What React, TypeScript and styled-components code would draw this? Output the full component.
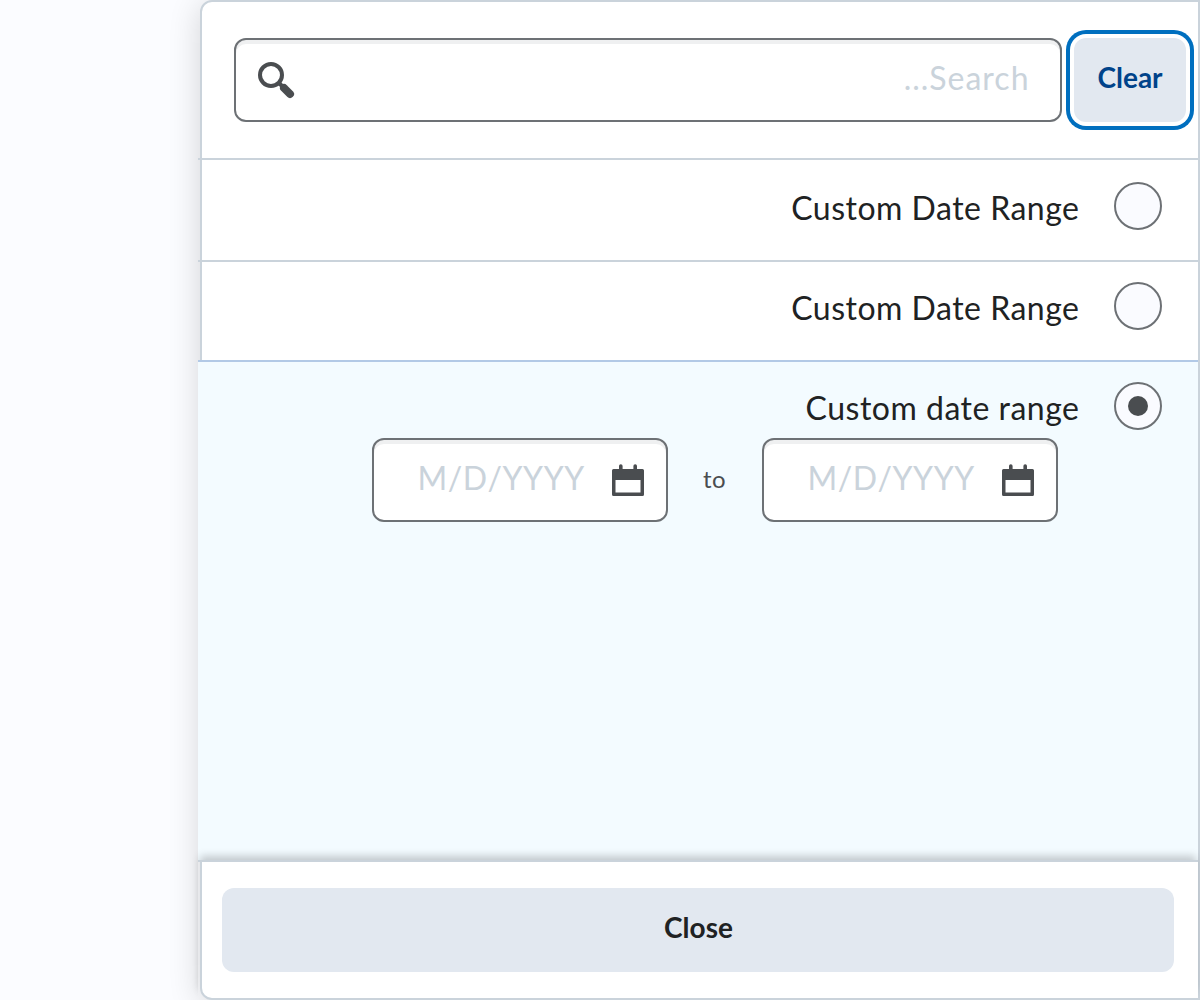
import React from "react";
import styled, { createGlobalStyle, css } from "styled-components";

const Global = createGlobalStyle`
  *, *::before, *::after { box-sizing: border-box; }
  body {
    margin: 0;
    background: #fbfcff;
    color: #202223;
    font-family: Lato, "Liberation Sans", sans-serif;
    overflow: hidden;
  }
`;

const Page = styled.main`
  height: 1000px;
  padding-left: 200px;
`;

const Panel = styled.section`
  display: flex;
  flex-direction: column;
  height: 1000px;
  border: 2px solid #cad3db;
  border-radius: 12px 0 0 12px;
  background: #fff;
  box-shadow: 0 4px 32px rgba(0, 0, 0, 0.16);
`;

const SearchBar = styled.header`
  display: flex;
  gap: 12px;
  height: 158px;
  margin-left: -4px;
  padding: 36px 12px 0 36px;
  border-bottom: 2px solid #cad3db;
`;

const Field = styled.div<{ $width: number; $padding: string }>`
  display: flex;
  align-items: center;
  justify-content: space-between;
  width: ${(p) => p.$width}px;
  height: 84px;
  padding: ${(p) => p.$padding};
  border: 2px solid #6d7175;
  border-radius: 12px;
  background: #fff;
  box-shadow: inset 0 4px 0 #eff0f1;
`;

const Input = styled.input<{ $width: number; $align?: string; $spacing: number }>`
  width: ${(p) => p.$width}px;
  height: 48px;
  margin-bottom: 4px;
  padding: 0;
  border: 0;
  outline: 0;
  background: transparent;
  font: 400 32px/48px Lato, sans-serif;
  letter-spacing: ${(p) => p.$spacing}px;
  text-align: ${(p) => p.$align ?? "left"};
  &::placeholder { color: #cad3db; opacity: 1; }
`;

const Button = styled.button<{ $focused?: boolean }>`
  flex: 1;
  height: 84px;
  padding: 0 0 6px 1px;
  border: 0;
  border-radius: 12px;
  background: #e2e8f0;
  color: #202223;
  font: 700 28px/40px Lato, sans-serif;
  ${(p) => p.$focused && css`
    padding-left: 0;
    color: #00438a;
    box-shadow: 0 0 0 4px #fff, 0 0 0 8px #006fbf;
  `}
`;

const Choice = styled.div<{ $height: number; $top?: number; $selected?: boolean }>`
  height: ${(p) => p.$height}px;
  margin-left: -4px;
  padding: ${(p) => p.$top ?? 20}px 36px 0;
  border-bottom: ${(p) => (p.$selected ? 0 : 2)}px solid #cad3db;
  &:has(+ [data-selected]) { border-bottom-color: #b2c9e6; }
  ${(p) => p.$selected && css`
    background: #f3fbff;
  `}
`;

const ChoiceLabel = styled.label`
  display: flex;
  align-items: center;
  justify-content: flex-end;
  gap: 34.5px;
  height: 48px;
  font-size: 32px;
  line-height: 48px;
  letter-spacing: 0.5px;
  span { padding-top: 4px; }
`;

const Radio = styled.i<{ $checked?: boolean }>`
  display: grid;
  place-items: center;
  width: 48px;
  height: 48px;
  border: 2px solid #6d7175;
  border-radius: 50%;
  background: #fafbff;
  &::after {
    content: "";
    width: 20px;
    height: 20px;
    border-radius: 50%;
    background: ${(p) => (p.$checked ? "#4a4d50" : "transparent")};
  }
`;

const Dates = styled.div`
  display: flex;
  align-items: center;
  justify-content: space-between;
  width: 686px;
  margin: 8px 0 0 138px;
`;

const Between = styled.span`
  padding: 0 1px 3px 0;
  color: #4a4d50;
  font-size: 24px;
  letter-spacing: 0.5px;
`;

const Footer = styled.footer`
  display: flex;
  height: 138px;
  margin-left: -4px;
  padding: 26px 24px 0;
  border-top: 2px solid #cad3db;
  box-shadow: 0 -6px 8px -2px rgba(0, 0, 0, 0.2);
`;

const SearchIcon = () => (
  <svg width="40" height="40" viewBox="0 0 40 40" fill="none" stroke="#4a4d50">
    <circle cx="15" cy="15" r="11" strokeWidth="4" />
    <path d="M22.5 22.5l4 4" strokeWidth="4" />
    <path d="M28 28l6 6" strokeWidth="8" strokeLinecap="round" />
  </svg>
);

const CalendarIcon = () => (
  <svg width="32" height="32" viewBox="0 0 32 32" fill="#4a4d50">
    <path
      fillRule="evenodd"
      d="M7 2a1.8 1.8 0 0 1 3.6 0v3h10.8V2a1.8 1.8 0 0 1 3.6 0v3h5.500a1.500 1.500 0 0 1 1.500 1.500v24a1.500 1.500 0 0 1-1.500 1.500h-29A1.500 1.500 0 0 1 0 30.500v-24A1.500 1.500 0 0 1 1.500 5H7zM3.500 16v12.500h25V16z"
    />
  </svg>
);

const DateField = () => (
  <Field $width={296} $padding="0 22px 0 43.5px">
    <Input $width={180} $spacing={0.58} placeholder="M/D/YYYY" />
    <CalendarIcon />
  </Field>
);

export default function App() {
  return (
    <Page>
      <Global />
      <Panel>
        <SearchBar>
          <Field $width={828} $padding="0 30.5px 0 20px">
            <SearchIcon />
            <Input $width={500} $align="right" $spacing={1} placeholder="...Search" />
          </Field>
          <Button $focused>Clear</Button>
        </SearchBar>
        <Choice $height={102} $top={22}>
          <ChoiceLabel><span>Custom Date Range</span><Radio /></ChoiceLabel>
        </Choice>
        <Choice $height={100}>
          <ChoiceLabel><span>Custom Date Range</span><Radio /></ChoiceLabel>
        </Choice>
        <Choice $height={498} $selected data-selected>
          <ChoiceLabel><span>Custom date range</span><Radio $checked /></ChoiceLabel>
          <Dates>
            <DateField />
            <Between>to</Between>
            <DateField />
          </Dates>
        </Choice>
        <Footer><Button>Close</Button></Footer>
      </Panel>
    </Page>
  );
}
